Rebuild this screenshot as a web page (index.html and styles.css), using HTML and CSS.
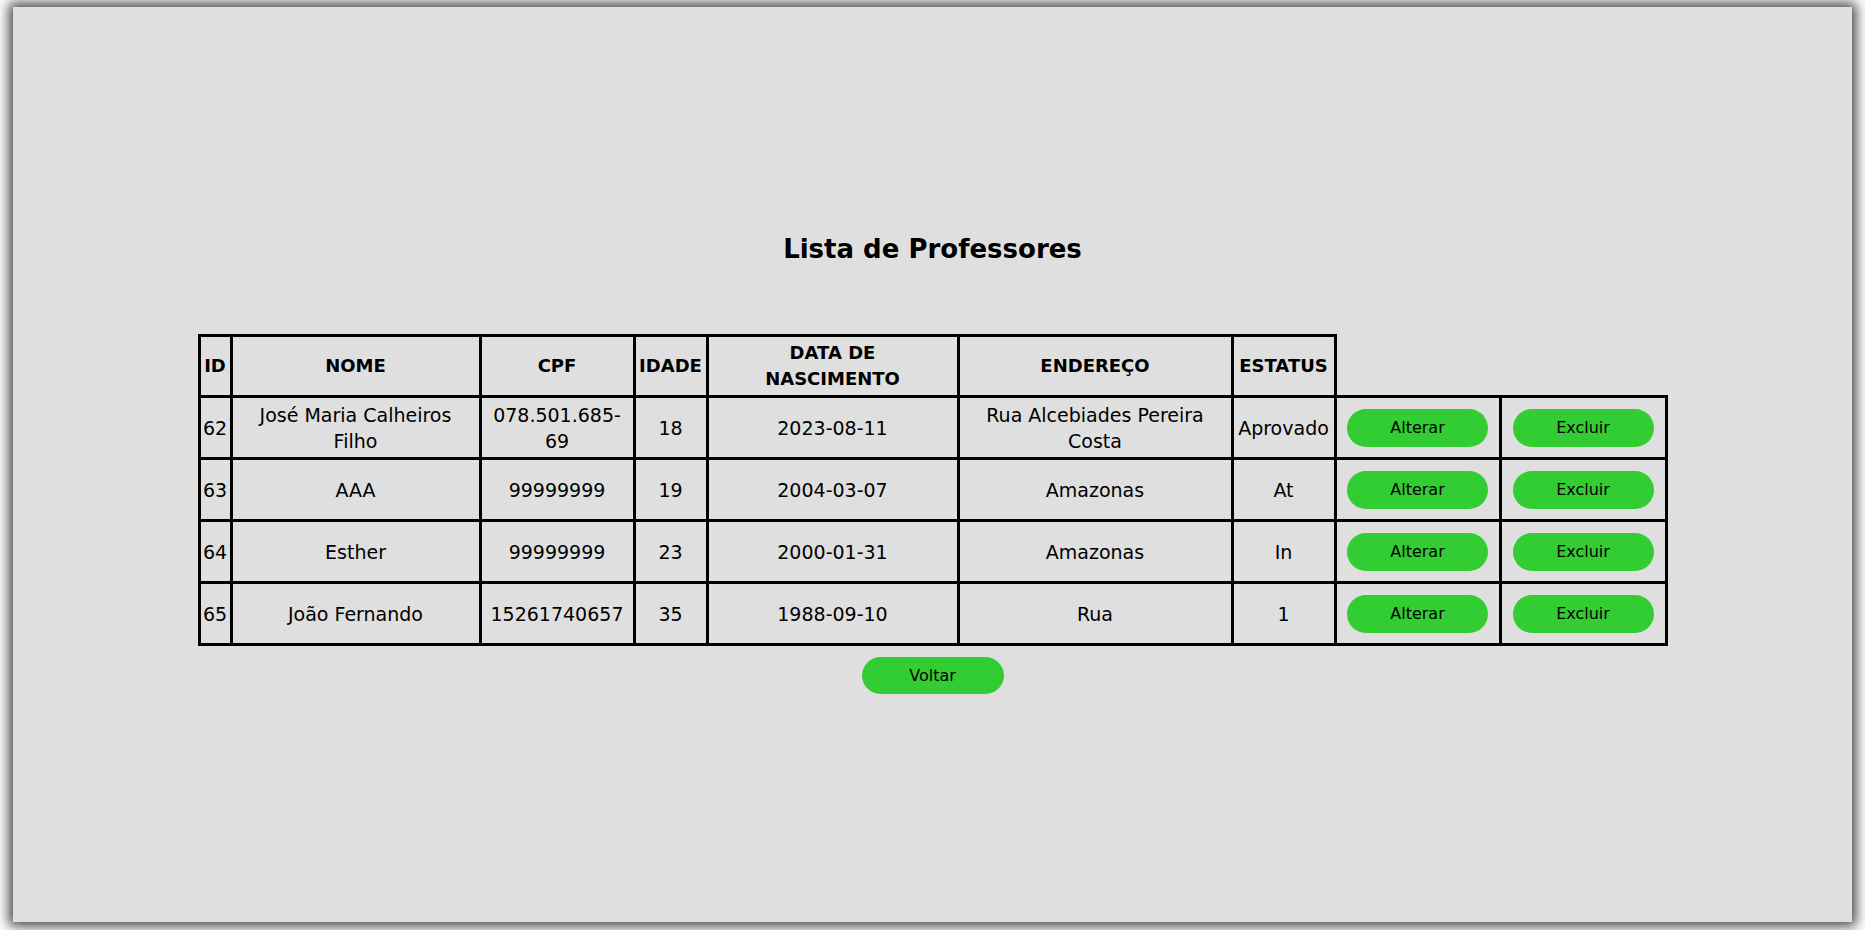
FILE: index.html
```html
<!DOCTYPE html>
<html lang="pt-BR">
<head>
<meta charset="utf-8">
<title>Lista de Professores</title>
<link rel="stylesheet" href="styles.css">
</head>
<body>
<main class="page">
  <h1 class="title">Lista de Professores</h1>
  <table class="grid">
    <colgroup>
      <col class="w-id"><col class="w-nome"><col class="w-cpf"><col class="w-idade"><col class="w-data"><col class="w-end"><col class="w-status"><col class="w-btn"><col class="w-btn2">
    </colgroup>
    <thead>
      <tr>
        <th>ID</th>
        <th>NOME</th>
        <th>CPF</th>
        <th>IDADE</th>
        <th class="wide">DATA DE NASCIMENTO</th>
        <th>ENDEREÇO</th>
        <th>ESTATUS</th>
      </tr>
    </thead>
    <tbody>
      <tr>
        <td class="tight">62</td>
        <td class="pad">José Maria Calheiros Filho</td>
        <td>078.501.685-69</td>
        <td>18</td>
        <td>2023-08-11</td>
        <td class="pad">Rua Alcebiades Pereira Costa</td>
        <td class="tight">Aprovado</td>
        <td><button class="btn">Alterar</button></td>
        <td><button class="btn">Excluir</button></td>
      </tr>
      <tr>
        <td class="tight">63</td>
        <td class="pad">AAA</td>
        <td>99999999</td>
        <td>19</td>
        <td>2004-03-07</td>
        <td class="pad">Amazonas</td>
        <td class="tight">At</td>
        <td><button class="btn">Alterar</button></td>
        <td><button class="btn">Excluir</button></td>
      </tr>
      <tr>
        <td class="tight">64</td>
        <td class="pad">Esther</td>
        <td>99999999</td>
        <td>23</td>
        <td>2000-01-31</td>
        <td class="pad">Amazonas</td>
        <td class="tight">In</td>
        <td><button class="btn">Alterar</button></td>
        <td><button class="btn">Excluir</button></td>
      </tr>
      <tr>
        <td class="tight">65</td>
        <td class="pad">João Fernando</td>
        <td>15261740657</td>
        <td>35</td>
        <td>1988-09-10</td>
        <td class="pad">Rua</td>
        <td class="tight">1</td>
        <td><button class="btn">Alterar</button></td>
        <td><button class="btn">Excluir</button></td>
      </tr>
    </tbody>
  </table>
  <button class="btn btn-back">Voltar</button>
</main>
</body>
</html>
```

FILE: styles.css
```css
html, body {
  margin: 0;
  padding: 0;
  background: #ffffff;
}

body {
  font-family: "Comic Sans MS", "DejaVu Sans", sans-serif;
  color: #000;
}

.page {
  box-sizing: border-box;
  width: 1839px;
  height: 915px;
  margin: 7px 13px 8px 13px;
  background: #dfdfdf;
  box-shadow: 0 0 12px 4px rgba(0, 0, 0, 0.75);
  display: flex;
  flex-direction: column;
  align-items: center;
  padding-top: 222px;
}

.title {
  margin: 0 0 65px 0;
  font-size: 26px;
  line-height: 40px;
  font-weight: bold;
}

.grid {
  border-collapse: collapse;
  table-layout: fixed;
  width: 1470px;
}

.w-id { width: 32px; }
.w-nome { width: 249px; }
.w-cpf { width: 154px; }
.w-idade { width: 73px; }
.w-data { width: 251px; }
.w-end { width: 274px; }
.w-status { width: 103px; }
.w-btn { width: 165px; }
.w-btn2 { width: 166px; }

.grid th,
.grid td {
  border: 3px solid #000;
  text-align: center;
  vertical-align: middle;
  padding: 0 2px;
  line-height: 26px;
}

.grid th {
  font-size: 18px;
  font-weight: bold;
  height: 58px;
  padding: 0 1px;
}

.grid th.wide {
  padding: 0 14px;
}

.grid td {
  font-size: 19px;
  height: 59px;
}

.grid td.tight {
  padding: 0 1px;
}

.grid td.pad {
  padding: 0 6px;
}

.btn {
  font-family: "Comic Sans MS", "DejaVu Sans", sans-serif;
  font-size: 16px;
  color: #000;
  background: #32cd32;
  border: none;
  border-radius: 19px;
  width: 141px;
  height: 38px;
  padding: 0;
  cursor: pointer;
}

.btn-back {
  margin-top: 11px;
  width: 142px;
  height: 37px;
}
```
